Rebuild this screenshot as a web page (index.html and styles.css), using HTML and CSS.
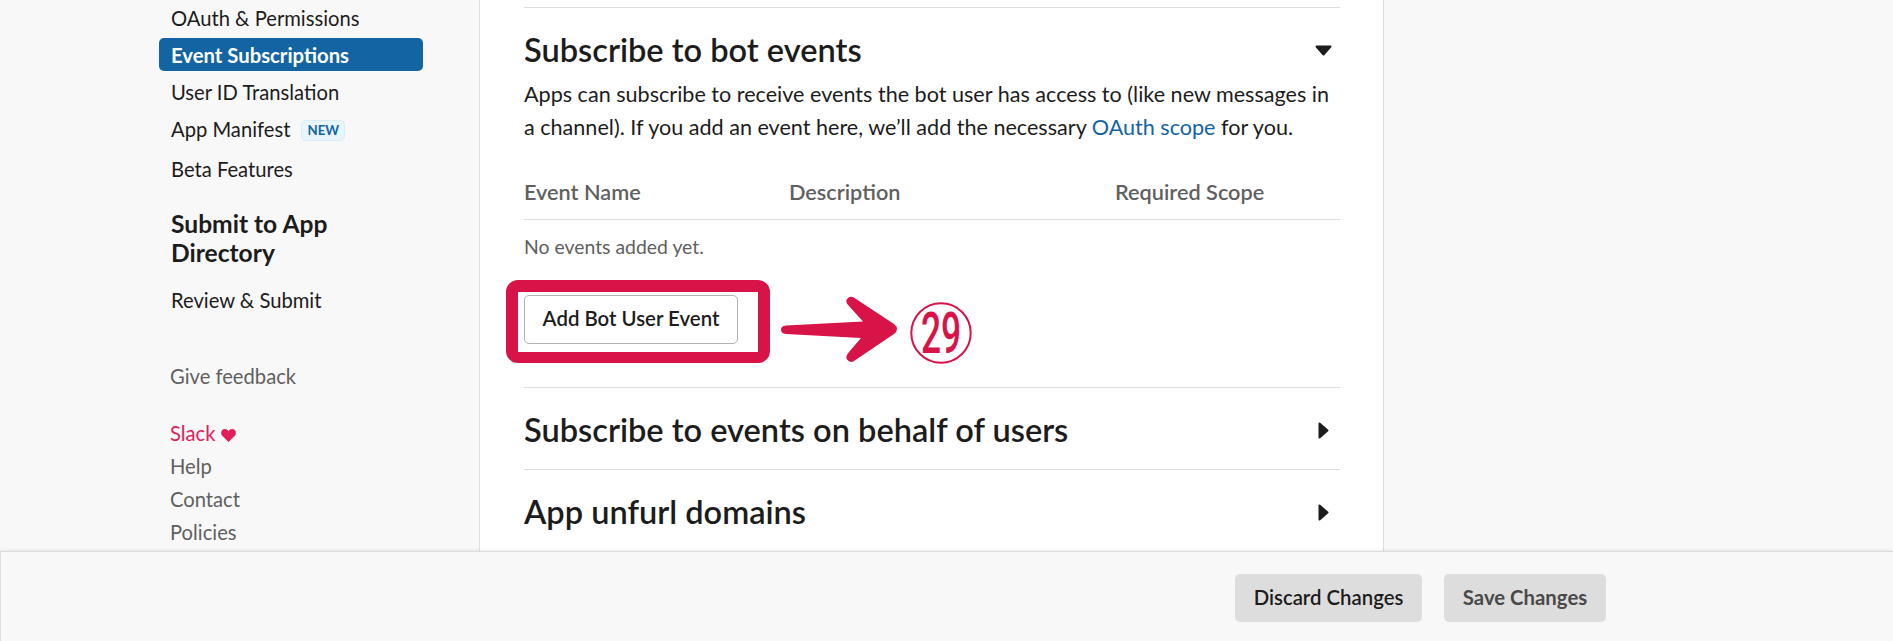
FILE: index.html
```html
<!DOCTYPE html>
<html lang="en">
<head>
<meta charset="utf-8">
<title>Event Subscriptions</title>
<link rel="stylesheet" href="styles.css">
</head>
<body>
<div class="page">
  <div class="columns">
    <nav class="sidebar">
      <a class="item">OAuth &amp; Permissions</a>
      <a class="item active">Event Subscriptions</a>
      <a class="item">User ID Translation</a>
      <a class="item tall">App Manifest <span class="badge">NEW</span></a>
      <a class="item">Beta Features</a>
      <h3 class="group">Submit to App Directory</h3>
      <a class="item">Review &amp; Submit</a>
      <div class="links">
        <a class="feedback">Give feedback</a>
        <a class="brand">Slack <svg class="heart" viewBox="0 0 15 13"><path d="M7.5 13 1 6.6C-.7 4.500 0 0 3.900 0 5.700 0 6.900 1 7.500 2.200 8.100 1 9.300 0 11.100 0 15 0 15.700 4.500 14 6.600Z"/></svg></a>
        <a>Help</a>
        <a>Contact</a>
        <a>Policies</a>
      </div>
    </nav>
    <main class="panel">
      <section class="section bot">
        <div class="head"><h2>Subscribe to bot events</h2><svg class="caret down" viewBox="0 0 17 11"><path d="M1.500 1.500h14L8.500 9.500Z"/></svg></div>
        <p class="intro">Apps can subscribe to receive events the bot user has access to (like new messages in<br>a channel). If you add an event here, we’ll add the necessary <a class="link">OAuth scope</a> for you.</p>
        <div class="table-head"><span>Event Name</span><span>Description</span><span>Required Scope</span></div>
        <p class="empty">No events added yet.</p>
        <div class="action">
          <button class="add">Add Bot User Event</button>
          <div class="highlight"></div>
          <svg class="annotation" viewBox="0 0 200 80">
            <path class="arrow" d="M5 35.500 82 31.500 68 16Q63 11 67 8 70 5.500 73.500 8L113 34Q119 39 113 44L73 71Q69 73.500 66 69.500 64 66.500 68 62L80 48 5 44Q0 43.500 0 39.800 0 36 5 35.500Z"/>
            <circle class="ring" cx="160" cy="43" r="29.700"/>
            <text class="step" transform="translate(160 63) scale(.61 1)" text-anchor="middle">29</text>
          </svg>
        </div>
      </section>
      <section class="section closed"><div class="head"><h2>Subscribe to events on behalf of users</h2><svg class="caret" viewBox="0 0 11 17"><path d="M1.500 1.500v14L9.500 8.500Z"/></svg></div></section>
      <section class="section closed"><div class="head"><h2>App unfurl domains</h2><svg class="caret" viewBox="0 0 11 17"><path d="M1.500 1.500v14L9.500 8.500Z"/></svg></div></section>
    </main>
  </div>
  <footer class="footer">
    <button class="btn">Discard Changes</button>
    <button class="btn save">Save Changes</button>
  </footer>
</div>
</body>
</html>
```
FILE: styles.css
```css
* { box-sizing: border-box; }
body { margin: 0; background: #f8f8f8; color: #1d1c1d; font-family: Lato, sans-serif; font-size: 20.200px; }
h2, h3, p { margin: 0; }
button { font-family: inherit; margin: 0; }
.page { height: 641px; overflow: hidden; display: flex; flex-direction: column; }
.columns { height: 551px; flex: none; display: flex; align-items: flex-start; overflow: hidden; }
.sidebar { width: 320px; padding: 1px 56px 0 0; margin-left: 159px; display: flex; flex-direction: column; }
.item { height: 33px; line-height: 35px; padding-left: 12px; margin-bottom: 4px; border-radius: 5px; white-space: nowrap; }
.active { background: #1264a3; color: #fff; font-weight: 700; font-size: 20.300px; }
.tall { height: 36px; display: flex; align-items: flex-start; }
.badge { margin: 8px 0 0 11px; width: 44px; height: 21px; border: 1px solid #d8ecf7; border-radius: 5px; background: #e8f5fa; color: #1264a3; font-size: 13.200px; line-height: 19px; font-weight: 700; text-align: center; }
.group { font-size: 24.600px; line-height: 29px; font-weight: 700; padding-left: 12px; margin: 20px 0 16px; }
.links { padding: 39.500px 0 0 11px; display: flex; flex-direction: column; color: #616061; line-height: 32.750px; }
.feedback { margin-bottom: 25px; }
.brand { color: #e01e5a; }
.heart { width: 15px; height: 13px; fill: #e01e5a; vertical-align: -1px; }
.panel { width: 905px; height: 580px; border: 1px solid #ddd; border-width: 0 1px; background: #fff; padding: 7px 43px 0 44px; }
.section { border-top: 1px solid #ddd; }
.bot { height: 380px; }
.closed { height: 82px; }
.head { display: flex; justify-content: space-between; align-items: center; height: 84px; padding-right: 7px; }
.head h2 { font-size: 32.550px; line-height: 40px; font-weight: 600; white-space: nowrap; margin-top: -1px; }
.caret { width: 11px; height: 17px; margin-right: 4px; fill: #1d1c1d; stroke: #1d1c1d; stroke-width: 2; stroke-linejoin: round; }
.caret.down { width: 17px; height: 11px; margin-right: 1px; }
.intro { font-size: 21.580px; line-height: 33px; white-space: nowrap; margin-top: -14px; }
.link { color: #1264a3; }
.table-head { display: grid; grid-template-columns: 265px 326px 1fr; height: 76px; padding-top: 32px; line-height: 32px; font-size: 21.700px; font-weight: 600; color: #616061; border-bottom: 1px solid #ddd; }
.empty { font-size: 19.400px; line-height: 28px; margin: 13px 0 34px; color: #616061; }
.action { position: relative; }
.add { display: block; width: 214px; height: 49px; border: 1px solid #b0b3b3; border-radius: 5px; background: #fff; color: #1d1c1d; font-size: 20.400px; font-weight: 600; padding: 0 0 3px; }
.highlight { position: absolute; left: -18px; top: -15px; width: 264px; height: 83px; border: 12px solid #d81347; border-bottom-width: 11px; border-radius: 12px; }
.annotation { position: absolute; left: 257px; top: -5px; width: 200px; height: 80px; }
.arrow, .step { fill: #d81347; }
.ring { fill: none; stroke: #d81347; stroke-width: 2; }
.step { font-family: Roboto, sans-serif; font-size: 58px; font-weight: 500; }
.footer { height: 90px; flex: none; background: #f8f8f8; border-top: 1px solid #ddd; border-left: 1px solid #ddd; box-shadow: 0 0 4px rgba(0,0,0,.12); display: flex; gap: 22px; padding: 22px 0 0 1234px; z-index: 1; }
.btn { width: 187px; height: 48px; border: 0; border-radius: 5px; background: #ddd; color: #1d1c1d; font-size: 20.350px; font-weight: 600; padding: 0 0 3px; }
.save { width: 162px; color: #4a494a; font-weight: 700; }
```
